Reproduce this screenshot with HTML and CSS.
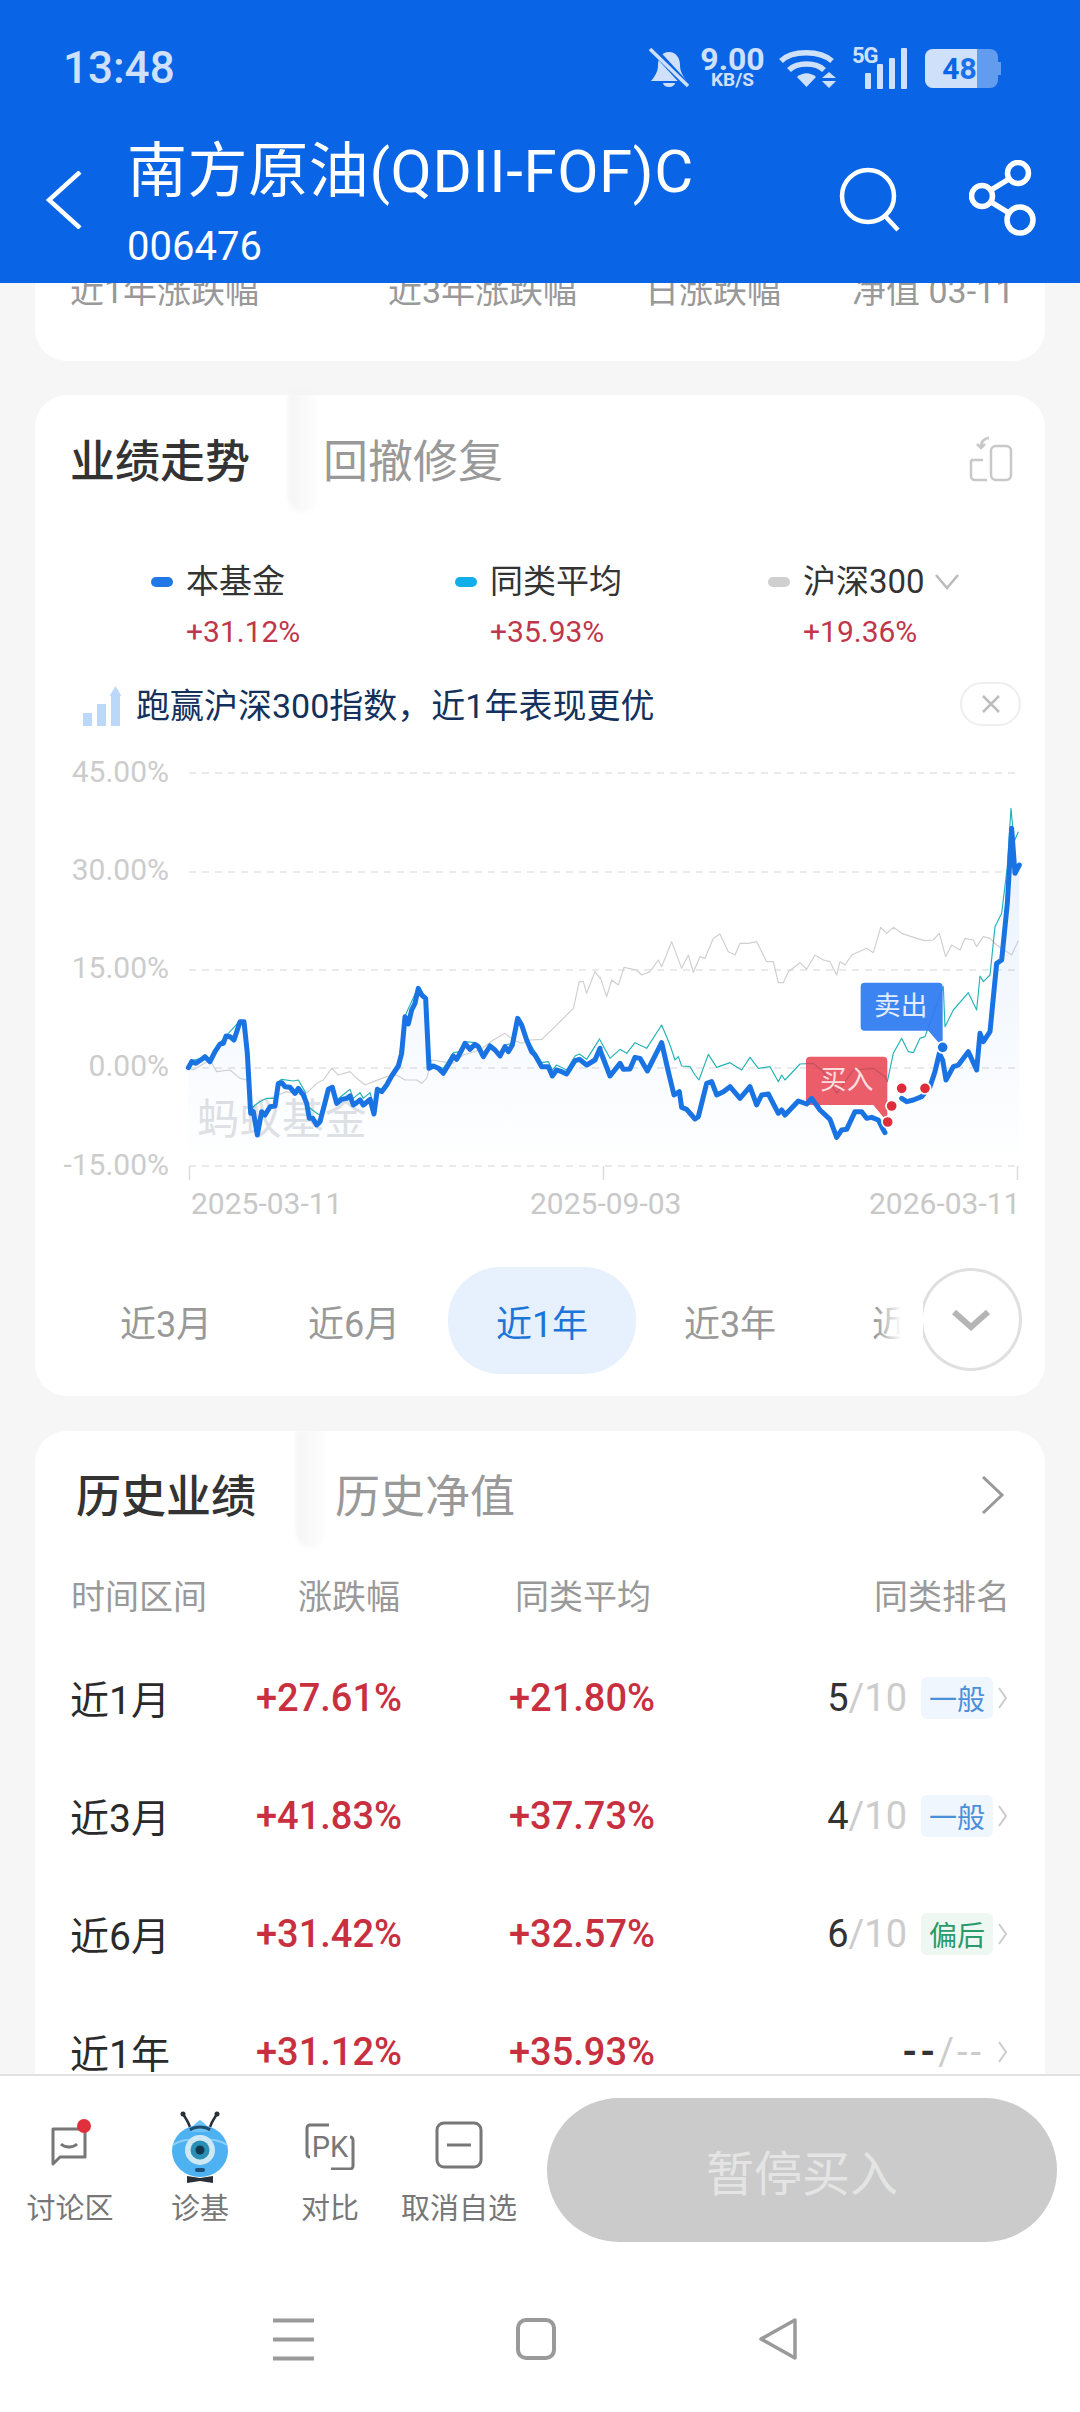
FILE: index.html
```html
<!DOCTYPE html>
<html lang="zh">
<head>
<meta charset="utf-8">
<title>南方原油(QDII-FOF)C</title>
<link rel="stylesheet" href="styles.css">
</head>
<body>
<div class="screen">
  <header class="header">
    <div class="status">
      <span class="time">13:48</span>
      <div class="status-icons">
        <svg class="ic-bell" viewBox="0 0 40 40" width="40" height="40"><path d="M20 4c-7 0-11 6-11 13 0 7-3 11-7 16h36c-4-5-7-9-7-16 0-7-4-13-11-13z" fill="#cfe0fb"/><path d="M14 35a6 4 0 0 0 12 0z" fill="#cfe0fb"/><path d="M3 0 39 39" stroke="#0a64e6" stroke-width="7"/><path d="M1 1 39 38" stroke="#cfe0fb" stroke-width="3.500"/></svg>
        <div class="speed"><span class="speed-num">9.00</span><span class="speed-unit">KB/S</span></div>
        <svg class="ic-wifi" viewBox="0 0 58 40" width="58" height="40"><g fill="none" stroke="#cfe0fb" stroke-width="5.500"><path d="M2 13C13 2 41 2 53 13"/><path d="M10 22c8-8 27-8 35 0"/></g><path d="M18 29c6-5 13-5 19 0l-9.500 10z" fill="#cfe0fb"/><path d="M50 24l7 6H43zM50 40l7-7H43z" fill="#cfe0fb"/></svg>
        <div class="signal">
          <span class="five-g">5G</span>
          <svg viewBox="0 0 44 42" width="44" height="42"><g fill="#cfe0fb"><rect x="0" y="26" width="6" height="16" rx="1"/><rect x="12" y="17" width="6" height="25" rx="1"/><rect x="24" y="11" width="6" height="31" rx="1"/><rect x="36" y="1" width="6" height="41" rx="1"/></g></svg>
        </div>
        <div class="battery"><div class="batt-fill"></div><span class="batt-num"><span class="bn-4">4</span><span class="bn-8">8</span></span><i class="batt-tip"></i></div>
      </div>
    </div>
    <div class="navrow">
      <svg class="ic-back" viewBox="0 0 36 58" width="36" height="58"><path d="M34 1 3 29l31 28" fill="none" stroke="#fff" stroke-width="4.500"/></svg>
      <div class="titles">
        <div class="title">南方原油(QDII-FOF)C</div>
        <div class="code">006476</div>
      </div>
      <svg class="ic-search" viewBox="0 0 62 66" width="62" height="66"><circle cx="29" cy="30" r="26" fill="none" stroke="#fff" stroke-width="4.500"/><path d="M46 50l13 14" stroke="#fff" stroke-width="4.500"/></svg>
      <svg class="ic-share" viewBox="0 0 68 76" width="68" height="76"><g fill="none" stroke="#fff" stroke-width="5.500"><circle cx="49" cy="13" r="10.500"/><circle cx="13" cy="36" r="10.500"/><circle cx="51" cy="60" r="13"/><path d="M40 19 22 30M22 42l18 11"/></g></svg>
    </div>
  </header>

  <main class="content">
    <section class="card card-top">
      <div class="top-labels">
        <span class="tl-1">近1年涨跌幅</span>
        <span class="tl-2">近3年涨跌幅</span>
        <span class="tl-3">日涨跌幅</span>
        <span class="tl-4">净值 03-11</span>
      </div>
    </section>

    <section class="card card-chart">
      <div class="tabs">
        <div class="tab tab-on tab-a">业绩走势</div>
        <div class="tab tab-off">回撤修复</div>
        <svg class="ic-rotate" viewBox="0 0 44 46" width="44" height="46"><g fill="none" stroke="#c8c8c8" stroke-width="2.500"><rect x="22" y="10" width="20" height="34" rx="5"/><path d="M2 24v16a4 4 0 0 0 4 4h12M2 24h12"/><path d="M20 2c-4 0-8 3-8 9M8 8l4 4 4-4"/></g></svg>
      </div>
      <div class="legend">
        <div class="lg lg-1"><div class="lg-name"><i class="dot dot-blue"></i>本基金</div><div class="lg-val">+31.12%</div></div>
        <div class="lg lg-2"><div class="lg-name"><i class="dot dot-cyan"></i>同类平均</div><div class="lg-val">+35.93%</div></div>
        <div class="lg lg-3"><div class="lg-name"><i class="dot dot-gray"></i>沪深300<svg class="lg-chev" viewBox="0 0 24 16" width="24" height="16"><path d="M1 1l11 13L23 1" fill="none" stroke="#bbb" stroke-width="2.500"/></svg></div><div class="lg-val">+19.36%</div></div>
      </div>
      <div class="hint">
        <svg class="ic-bars" viewBox="0 0 38 40" width="38" height="40"><g fill="#bcd8f8"><rect x="0" y="27" width="9" height="13"/><rect x="14" y="18" width="9" height="22"/><rect x="28" y="10" width="9" height="30"/><path d="M32.500 0l6 10h-12z"/></g></svg>
        <span class="hint-text">跑赢沪深300指数，近1年表现更优</span>
        <span class="hint-close"><svg viewBox="0 0 20 20" width="20" height="20"><path d="M2 2l16 16M18 2 2 18" stroke="#bdbdbd" stroke-width="2.500"/></svg></span>
      </div>
      <svg class="chart" viewBox="35 750 1010 480" width="1010" height="480">
        <defs>
          <linearGradient id="area" gradientUnits="userSpaceOnUse" x1="0" y1="100" x2="0" y2="1188">
            <stop offset="0" stop-color="#1e78e6" stop-opacity=".11"/>
            <stop offset=".72" stop-color="#1e78e6" stop-opacity=".03"/>
            <stop offset="1" stop-color="#1e78e6" stop-opacity="0"/>
          </linearGradient>
        </defs>
        <g class="grid">
          <path d="M189 773H1018M189 872H1018M189 970H1018M189 1068H1018M189 1166H1018"/>
        </g>
        <path class="tick" d="M189.500 1166v14M603.500 1166v14M1017.500 1166v14"/>
        <g class="axis-y">
          <text x="169" y="782">45.00%</text>
          <text x="169" y="880">30.00%</text>
          <text x="169" y="978">15.00%</text>
          <text x="169" y="1076">0.00%</text>
          <text x="169" y="1175">-15.00%</text>
        </g>
        <g class="axis-x">
          <text x="191" y="1214">2025-03-11</text>
          <text x="530" y="1214">2025-09-03</text>
          <text x="869" y="1214">2026-03-11</text>
        </g>
        <text class="mark" x="197" y="1134">蚂蚁基金</text>
        <g transform="translate(160 770) scale(.33333)">
          <path fill="url(#area)" d="M85 893 95 875 108 880 125 868 135 860 150 875 165 845 180 822 190 820 198 798 210 800 222 810 240 755 252 755 262 850 272 1030 280 1025 292 1095 305 1025 315 1035 330 1010 345 1008 355 940 365 938 375 950 390 952 405 970 415 955 430 975 440 1000 448 1045 458 1045 470 1065 480 1055 497 990 505 958 517 952 530 1000 545 988 560 985 570 978 580 1005 590 998 600 990 610 1005 630 988 642 1032 652 958 665 965 680 945 695 918 715 888 725 850 735 740 745 762 755 720 765 700 775 655 785 675 797 685 807 895 820 888 835 895 850 910 865 885 880 858 890 868 900 850 915 820 930 838 945 823 955 830 970 860 990 828 1005 840 1020 858 1035 830 1045 845 1057 825 1073 745 1085 765 1100 810 1115 845 1125 855 1145 890 1165 890 1177 918 1190 900 1205 905 1220 912 1245 872 1258 868 1280 885 1305 870 1320 835V1188H85Z"/>
          <polyline class="l-gray" points="85,893 100,900 150,870 170,905 210,900 240,925 262,930 275,1025 300,990 330,985 380,965 425,975 445,965 470,940 490,930 515,895 535,915 570,905 590,925 615,945 640,935 680,920 710,915 735,930 770,930 785,940 800,925 815,870 880,880 910,855 960,840 1000,810 1035,790 1060,810 1085,820 1110,810 1145,808 1180,775 1210,745 1240,715 1258,635 1270,635 1280,670 1305,605 1320,625"/>
          <polyline class="l-teal" points="85,890 95,872 125,865 150,870 180,818 240,752 252,752 262,850 272,1020 285,1005 300,995 320,985 345,985 355,935 365,928 400,933 415,930 435,965 445,1010 470,1030 480,1035 497,985 505,955 517,950 530,990 570,958 580,985 600,968 610,985 630,968 642,1010 652,952 665,960 715,880 735,738 775,650 797,682 807,880 850,895 880,848 900,845 915,815 945,818 970,855 990,822 1020,850 1035,825 1057,820 1073,745 1100,805 1145,878 1165,875 1177,900 1190,885 1220,900 1245,858 1258,852 1280,868 1320,805"/>
          <polyline class="l-blue" points="85,893 95,875 108,880 125,868 135,860 150,875 165,845 180,822 190,820 198,798 210,800 222,810 240,755 252,755 262,850 272,1030 280,1025 292,1095 305,1025 315,1035 330,1010 345,1008 355,940 365,938 375,950 390,952 405,970 415,955 430,975 440,1000 448,1045 458,1045 470,1065 480,1055 497,990 505,958 517,952 530,1000 545,988 560,985 570,978 580,1005 590,998 600,990 610,1005 630,988 642,1032 652,958 665,965 680,945 695,918 715,888 725,850 735,740 745,762 755,720 765,700 775,655 785,675 797,685 807,895 820,888 835,895 850,910 865,885 880,858 890,868 900,850 915,820 930,838 945,823 955,830 970,860 990,828 1005,840 1020,858 1035,830 1045,845 1057,825 1073,745 1085,765 1100,810 1115,845 1125,855 1145,890 1165,890 1177,918 1190,900 1205,905 1220,912 1245,872 1258,868 1280,885 1305,870 1320,835"/>
        </g>
        <g transform="translate(600 770) scale(.33333)">
          <path fill="url(#area)" d="M0 840 30 918 60 880 70 898 90 897 105 862 120 865 142 903 185 818 205 905 222 975 238 965 245 1012 260 1018 285 1047 295 1040 320 940 335 935 350 975 370 965 390 950 420 985 450 950 470 1005 485 975 505 972 535 1030 545 1020 555 1035 595 993 620 1002 635 985 660 1020 690 1048 710 1102 725 1080 740 1078 765 1025 785 1025 800 1045 815 1042 835 1050 845 1070 855 1088 905 985 920 995 940 990 965 980 990 950 1005 905 1018 850 1028 870 1038 930 1060 890 1075 885 1105 845 1130 900 1140 790 1150 815 1170 785 1190 580 1205 570 1222 400 1235 175 1245 310 1258 285V1188H0Z"/>
          <polyline class="l-gray" points="0,620 20,680 35,630 55,645 72,592 110,600 125,615 150,605 175,570 185,590 215,515 245,595 265,555 280,607 300,560 315,565 340,505 360,492 385,545 405,555 420,520 445,520 470,515 500,575 520,575 535,638 550,638 565,605 600,578 620,598 645,555 670,570 690,575 710,615 720,575 735,585 755,555 800,535 820,548 842,472 860,490 880,472 905,490 950,505 975,512 1000,510 1018,490 1037,560 1055,525 1080,540 1095,505 1120,510 1130,530 1150,500 1170,505 1190,525 1235,555 1255,512"/>
          <polyline class="l-teal" points="0,810 30,865 60,838 80,850 105,818 140,835 185,765 210,825 225,870 235,860 245,888 270,890 285,915 297,930 325,853 350,892 390,878 425,900 450,862 475,895 510,890 535,935 545,915 555,930 600,882 640,880 670,905 710,970 760,900 820,895 855,920 862,935 880,850 905,805 925,845 940,848 960,805 975,800 1030,650 1035,770 1060,720 1105,668 1130,720 1140,618 1150,635 1170,615 1185,470 1205,430 1222,290 1233,115 1242,215 1255,185"/>
          <path class="box-buy" d="M630 860H850a12 12 0 0 1 12 12V1056L820 1005H630a12 12 0 0 1-12-12V872a12 12 0 0 1 12-12Z"/>
          <path class="box-sell" d="M794 638H1016a12 12 0 0 1 12 12V832L985 782H794a12 12 0 0 1-12-12V650a12 12 0 0 1 12-12Z"/>
          <polyline class="l-blue" points="0,840 30,918 60,880 70,898 90,897 105,862 120,865 142,903 185,818 205,905 222,975 238,965 245,1012 260,1018 285,1047 295,1040 320,940 335,935 350,975 370,965 390,950 420,985 450,950 470,1005 485,975 505,972 535,1030 545,1020 555,1035 595,993 620,1002 635,985 660,1020 690,1048 710,1102 725,1080 740,1078 765,1025 785,1025 800,1045 815,1042 835,1050 845,1070 855,1088"/>
          <polyline class="l-blue" points="905,985 920,995 940,990 965,980 990,950 1005,905 1018,850 1028,870 1038,930 1060,890 1075,885 1105,845 1130,900 1140,790 1150,815 1170,785 1190,580 1205,570 1222,400 1235,175 1245,310 1258,285"/>
          <text class="box-text buy" x="740" y="956">买入</text>
          <text class="box-text sell" x="902" y="736">卖出</text>
          <g class="m-red">
            <circle cx="863" cy="1056" r="17"/><circle cx="875" cy="1008" r="17"/><circle cx="905" cy="955" r="17"/><circle cx="975" cy="955" r="17"/>
          </g>
          <circle class="m-blue" cx="1028" cy="832" r="17"/>
        </g>
      </svg>
      <div class="periods">
        <div class="period">近3月</div>
        <div class="period">近6月</div>
        <div class="period period-on">近1年</div>
        <div class="period">近3年</div>
        <div class="period">近5年</div>
        <div class="more"><svg viewBox="0 0 40 22" width="40" height="22"><path d="M3 3l17 15L37 3" fill="none" stroke="#b5b5b5" stroke-width="6"/></svg></div>
      </div>
    </section>

    <section class="card card-hist">
      <div class="tabs tabs-h">
        <div class="tab tab-on tab-b">历史业绩</div>
        <div class="tab tab-off">历史净值</div>
        <svg class="ic-next" viewBox="0 0 24 38" width="24" height="38"><path d="M2 1l19 18L2 37" fill="none" stroke="#999" stroke-width="3"/></svg>
      </div>
      <div class="thead">
        <span>时间区间</span><span class="th-r">涨跌幅</span><span class="th-c">同类平均</span><span class="th-end">同类排名</span>
      </div>
      <div class="row"><span class="r-name">近1月</span><span class="r-val">+27.61%</span><span class="r-val">+21.80%</span><span class="rank"><b>5</b><em>/10</em><span class="badge b-blue">一般</span><svg class="r-chev" viewBox="0 0 10 22" width="10" height="22"><path d="M1 1l7 10L1 21" fill="none" stroke="#ccc" stroke-width="2"/></svg></span></div>
      <div class="row"><span class="r-name">近3月</span><span class="r-val">+41.83%</span><span class="r-val">+37.73%</span><span class="rank"><b>4</b><em>/10</em><span class="badge b-blue">一般</span><svg class="r-chev" viewBox="0 0 10 22" width="10" height="22"><path d="M1 1l7 10L1 21" fill="none" stroke="#ccc" stroke-width="2"/></svg></span></div>
      <div class="row"><span class="r-name">近6月</span><span class="r-val">+31.42%</span><span class="r-val">+32.57%</span><span class="rank"><b>6</b><em>/10</em><span class="badge b-green">偏后</span><svg class="r-chev" viewBox="0 0 10 22" width="10" height="22"><path d="M1 1l7 10L1 21" fill="none" stroke="#ccc" stroke-width="2"/></svg></span></div>
      <div class="row"><span class="r-name">近1年</span><span class="r-val">+31.12%</span><span class="r-val">+35.93%</span><span class="rank rank-none"><b>--</b><em>/--</em><svg class="r-chev r-chev-far" viewBox="0 0 10 22" width="10" height="22"><path d="M1 1l7 10L1 21" fill="none" stroke="#ccc" stroke-width="2"/></svg></span></div>
    </section>
  </main>

  <footer class="footer">
    <div class="actions">
      <div class="act act-1">
        <svg viewBox="0 0 48 54" width="48" height="54"><path d="M7 12h32v28H14l-7 7z" fill="none" stroke="#777" stroke-width="3" stroke-linejoin="round"/><path d="M15 27c4 4 12 4 16 0" fill="none" stroke="#777" stroke-width="3"/><circle cx="38" cy="9" r="7" fill="#e0303c"/></svg>
        <span>讨论区</span>
      </div>
      <div class="act act-2">
        <svg viewBox="0 0 60 74" width="60" height="74">
          <path d="M20 16C18 10 16 8 13 3M40 16C42 10 44 8 47 3" fill="none" stroke="#2a2f38" stroke-width="2.500"/>
          <circle cx="13" cy="3" r="2.500" fill="#2a2f38"/><circle cx="47" cy="3" r="2.500" fill="#2a2f38"/>
          <ellipse cx="30" cy="40" rx="28" ry="26" fill="#4db1f2"/>
          <path d="M30 9c6 4 9 8 10 12H20c1-4 4-8 10-12z" fill="#6cc3f5"/>
          <path d="M20 19c5-4 15-4 20 0" fill="none" stroke="#1f4e75" stroke-width="3"/>
          <path d="M3 34c10-8 44-8 54 0" fill="none" stroke="#8fd0f8" stroke-width="2"/>
          <circle cx="30" cy="39" r="15" fill="#cfe8f6"/>
          <circle cx="30" cy="39" r="9.500" fill="#2a8fb5"/>
          <circle cx="30" cy="39" r="4.500" fill="#12384f"/>
          <rect x="25" y="57" width="10" height="4" rx="2" fill="#1f4e75"/>
          <path d="M17 65l13 2 13-2v7l-13-2-13 2z" fill="#2a2f38"/>
        </svg>
        <span>诊基</span>
      </div>
      <div class="act act-3">
        <svg viewBox="0 0 50 54" width="50" height="54"><path d="M24 9H5a3 3 0 0 0-3 3v26a3 3 0 0 0 3 3M26 53h19a3 3 0 0 0 3-3V24a3 3 0 0 0-3-3" fill="none" stroke="#777" stroke-width="3"/><text class="pk" x="25" y="41">PK</text></svg>
        <span>对比</span>
      </div>
      <div class="act act-4">
        <svg viewBox="0 0 48 54" width="48" height="54"><rect x="2" y="7" width="44" height="44" rx="7" fill="none" stroke="#777" stroke-width="3"/><path d="M12 29h24" stroke="#777" stroke-width="3"/></svg>
        <span>取消自选</span>
      </div>
      <div class="buy-btn">暂停买入</div>
    </div>
    <div class="sysnav">
      <svg viewBox="0 0 42 44" width="42" height="44"><path d="M1 3.500H42M1 22.500H42M1 41.500H42" stroke="#9a9a9a" stroke-width="4"/></svg>
      <svg viewBox="0 0 42 44" width="42" height="44"><rect x="3" y="3" width="36" height="38" rx="8" fill="none" stroke="#9a9a9a" stroke-width="4"/></svg>
      <svg viewBox="0 0 42 44" width="42" height="44"><path d="M38 3v38L4 22z" fill="none" stroke="#9a9a9a" stroke-width="3.500" stroke-linejoin="round"/></svg>
    </div>
  </footer>
</div>
</body>
</html>
```

FILE: styles.css
```css
* { box-sizing: border-box; margin: 0; padding: 0; }
html, body { width: 1080px; height: 2412px; overflow: hidden; background: #f6f6f6; }
body { font-family: Roboto, "Noto Sans CJK SC", sans-serif; }
svg { display: block; flex: none; }

.screen { width: 1080px; height: 2412px; display: flex; flex-direction: column; }

/* header */
.header { height: 283px; background: #0a64e6; flex: none; color: #fff; position: relative; z-index: 2; }
.status { height: 91px; padding: 45px 82px 0 63px; display: flex; align-items: center; justify-content: space-between; color: #cfe0fb; }
.time { font-size: 44px; font-weight: 500; line-height: 46px; }
.status-icons { display: flex; align-items: center; }
.ic-bell { margin-right: 10px; }
.speed { width: 67px; display: flex; flex-direction: column; align-items: center; margin-right: 13px; font-weight: 700; }
.speed-num { font-size: 32px; line-height: 24px; }
.speed-unit { font-size: 19px; line-height: 18px; }
.ic-wifi { margin-right: 16px; }
.signal { width: 56px; height: 42px; position: relative; display: flex; justify-content: flex-end; margin-right: 16px; }
.five-g { position: absolute; left: -1px; top: -2px; font-size: 22px; line-height: 22px; font-weight: 700; letter-spacing: -1px; }
.battery { width: 73px; height: 39px; position: relative; background: rgba(207,224,251,.45); border-radius: 8px; display: flex; align-items: center; justify-content: center; }
.batt-fill { position: absolute; left: 0; top: 0; bottom: 0; width: 52px; background: #cfe0fb; border-radius: 8px 0 0 8px; }
.batt-num { position: relative; font-size: 30px; font-weight: 700; margin-left: -4px; }
.bn-4 { color: #0a64e6; }
.bn-8 { color: #1a70ec; }
.batt-tip { position: absolute; right: -3px; top: 13px; width: 3px; height: 13px; background: rgba(207,224,251,.45); }

.navrow { height: 147px; margin-top: 45px; display: flex; align-items: flex-start; padding-left: 46px; }
.ic-back { margin-top: 35px; }
.titles { width: 712px; margin-left: 45px; }
.title { font-size: 60px; line-height: 72px; font-weight: 400; white-space: nowrap; letter-spacing: .6px; }
.code { font-size: 40px; line-height: 46px; margin-top: 16px; }
.ic-search { margin-top: 30px; }
.ic-share { margin-top: 24px; margin-left: 68px; }

/* content */
.content { height: 1791px; flex: none; overflow: hidden; display: flex; flex-direction: column; gap: 34px; padding: 0 35px; }
.card { background: #fff; border-radius: 32px; flex: none; }
.card-top { height: 78px; border-radius: 0 0 32px 32px; overflow: hidden; }
.top-labels { display: flex; font-size: 34px; line-height: 44px; color: #999; margin-top: -14px; white-space: nowrap; }
.top-labels span { display: block; }
.tl-1 { margin-left: 35px; width: 318px; }
.tl-2 { width: 257px; }
.tl-3 { width: 207px; }

.card-chart { height: 1001px; position: relative; }
.tabs { height: 130px; display: flex; align-items: center; position: relative; padding: 6px 0 0 35px; }
.tab { font-size: 45px; line-height: 60px; white-space: nowrap; }
.tab-on { color: #333; font-weight: 500; position: relative; }
.tab-off { color: #999; }
.tab-a { width: 253px; }
.tab-on::after { content: ""; position: absolute; width: 32px; background: linear-gradient(90deg, #f4f4f4, rgba(246,246,246,0)); border-radius: 0 0 16px 16px; filter: blur(2px); }
.tab-a::after { right: 3px; top: -41px; height: 120px; }
.ic-rotate { position: absolute; right: 32px; top: 41px; }

.legend { display: flex; padding: 32px 0 0 116px; height: 132px; }
.lg { flex: none; }
.lg-1 { width: 304px; }
.lg-2 { width: 313px; }
.lg-name { display: flex; align-items: center; font-size: 33px; line-height: 50px; color: #333; }
.dot { width: 22px; height: 10px; border-radius: 5px; margin-right: 13px; flex: none; }
.dot-blue { background: #1f78e6; }
.dot-cyan { background: #12aeea; }
.dot-gray { background: #cfcfcf; }
.lg-chev { margin-left: 10px; }
.lg-val { font-size: 30px; line-height: 50px; color: #c0364a; margin-left: 35px; }

.hint { height: 50px; margin-top: 24px; display: flex; align-items: center; padding-left: 48px; position: relative; }
.hint-text { margin-left: 15px; font-size: 34px; line-height: 50px; color: #13315c; white-space: nowrap; }
.hint-close { position: absolute; left: 925px; top: 1px; width: 61px; height: 44px; border: 2px solid #eee; border-radius: 24px; display: flex; align-items: center; justify-content: center; }

.chart { margin-top: 19px; }
.grid path { stroke: #e3e3e3; stroke-width: 1.500; stroke-dasharray: 7 6; fill: none; }
.tick { stroke: #dcdcdc; stroke-width: 1.500; fill: none; }
.axis-y text { font-size: 30px; fill: #cccccc; text-anchor: end; }
.axis-x text { font-size: 30px; fill: #c8c8c8; }
.mark { font-family: "Noto Sans CJK SC", sans-serif; font-size: 42px; letter-spacing: .5px; fill: #dfe1e4; }
.l-gray { fill: none; stroke: #cfcfcf; stroke-width: 3.500; stroke-linejoin: round; }
.l-teal { fill: none; stroke: #25b3b8; stroke-width: 3.500; stroke-linejoin: round; }
.l-blue { fill: none; stroke: #1a73e3; stroke-width: 15; stroke-linejoin: round; stroke-linecap: round; }
.box-buy { fill: rgba(229,57,72,.82); }
.box-sell { fill: rgba(43,122,240,.92); }
.box-text { font-family: "Noto Sans CJK SC", sans-serif; font-size: 80px; text-anchor: middle; }
.buy { fill: #fbdfe0; }
.sell { fill: #e2edfd; }
.m-red circle { fill: #dd2c3c; stroke: #fff; stroke-width: 5; }
.m-blue { fill: #1a73e3; stroke: #fff; stroke-width: 5; }

.periods { height: 107px; margin-top: 37px; padding-left: 37px; display: flex; align-items: center; position: relative; overflow: hidden; }
.period { width: 188px; flex: none; height: 107px; border-radius: 52px; display: flex; align-items: center; justify-content: center; font-size: 36px; color: #999; }
.period-on { background: #e6f1fd; color: #1e74d8; }
.more { position: absolute; left: 885px; top: 1px; width: 102px; height: 103px; border: 3px solid #e0e0e0; border-radius: 50%; background: #fff; display: flex; align-items: center; justify-content: center; }
.more::before { content: ""; position: absolute; right: 100%; top: 0; bottom: 0; width: 48px; background: linear-gradient(90deg, rgba(255,255,255,0), #fff 55%); }

.card-hist { height: 800px; margin-top: 1px; }
.tabs-h { padding-left: 41px; height: 128px; }
.tab-b { width: 259px; }
.tab-b::after { right: 7px; top: -38px; height: 118px; }
.ic-next { position: absolute; right: 40px; top: 45px; }

.thead { display: grid; grid-template-columns: 134px 195px 1fr auto; padding: 0 35px 0 36px; font-size: 34px; line-height: 50px; height: 50px; margin-top: 13px; color: #999; white-space: nowrap; }
.th-r { text-align: right; }
.th-c { padding-left: 115px; }
.th-end { text-align: right; }

.row { display: grid; grid-template-columns: 130px 202px 253px 1fr; height: 118px; align-items: center; padding: 0 37px 0 35px; white-space: nowrap; }
.thead + .row { margin-top: 17px; }
.r-name { font-size: 39px; font-weight: 400; color: #2a2a2a; padding-bottom: 3px; }
.r-val { font-size: 38px; font-weight: 500; color: #c8303f; text-align: right; }
.rank { display: flex; align-items: center; justify-content: flex-end; font-size: 38px; }
.rank b { color: #333; font-weight: 400; }
.rank em { color: #ccc; font-style: normal; }
.rank-none b { font-weight: 700; letter-spacing: 3px; }
.rank-none em { letter-spacing: 3px; }
.badge { width: 72px; height: 42px; border-radius: 6px; margin-left: 14px; font-size: 28px; display: flex; align-items: center; justify-content: center; }
.b-blue { background: #f0f6fd; color: #4a90d9; }
.b-green { background: #eef7f2; color: #2a9a6a; }
.r-chev { margin-left: 5px; }
.r-chev-far { margin-left: 14px; }

/* footer */
.footer { flex: 1; background: #fff; border-top: 2px solid #e2e2e2; position: relative; z-index: 1; }
.actions { height: 168px; display: flex; position: relative; padding-top: 22px; }
.act { display: flex; flex-direction: column; align-items: center; color: #777; font-size: 29px; line-height: 40px; white-space: nowrap; flex: none; height: 128px; justify-content: flex-end; position: relative; }
.act svg { position: absolute; left: 50%; transform: translateX(-50%); }
.act-1 { width: 100px; margin-left: 20px; }
.act-1 svg { top: 19px; }
.act-2 { width: 100px; margin-left: 30px; }
.act-2 svg { top: 13px; }
.act-3 { width: 100px; margin-left: 30px; }
.act-3 svg { top: 18px; }
.act-4 { width: 114px; margin-left: 22px; }
.act-4 svg { top: 18px; }
.act > span { position: relative; top: 3px; }
.buy-btn { position: absolute; left: 547px; top: 22px; width: 510px; height: 144px; border-radius: 72px; background: #cbcbcb; color: #e4e4e4; font-size: 48px; display: flex; align-items: center; justify-content: center; }
.pk { font-size: 29px; fill: #777; text-anchor: middle; font-family: Roboto, sans-serif; }

.sysnav { display: flex; padding: 73px 0 0 272px; }
.sysnav svg:nth-child(2) { margin-left: 201px; }
.sysnav svg:nth-child(3) { margin-left: 200px; }
```
